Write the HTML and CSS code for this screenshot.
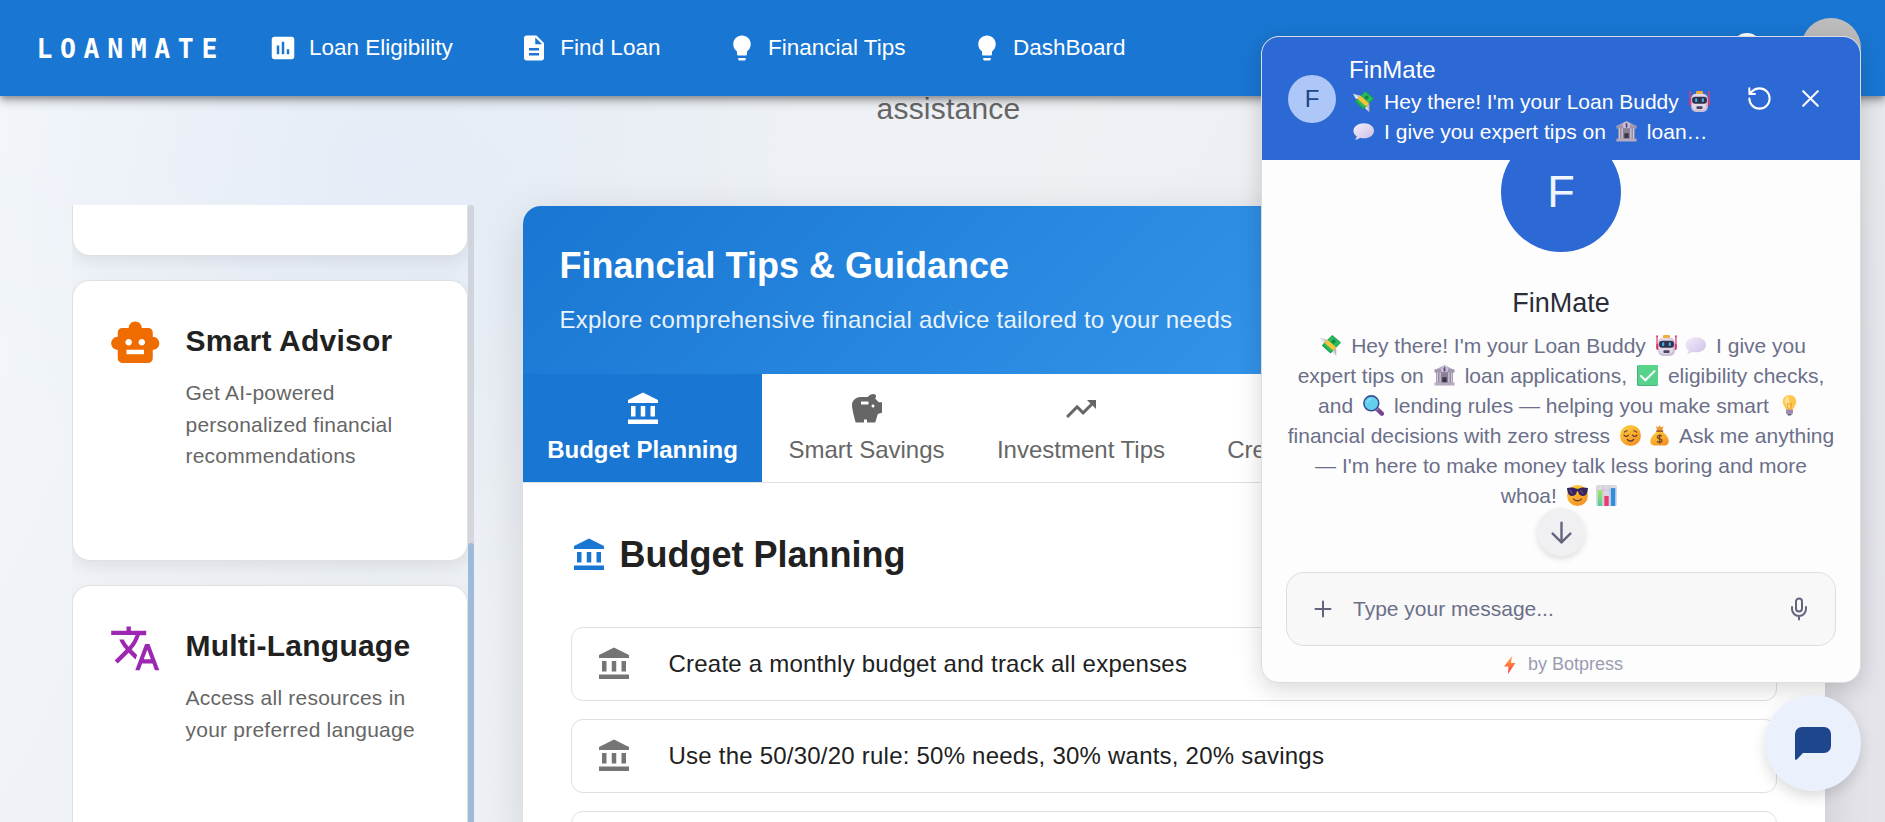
FILE: index.html
```html
<!DOCTYPE html>
<html lang="en">
<head>
<meta charset="utf-8">
<title>LoanMate - Financial Tips</title>
<link rel="stylesheet" href="styles.css">
</head>
<body>
<svg class="defs" width="0" height="0" aria-hidden="true">
  <defs>
    <linearGradient id="gYellow" x1="0" y1="0" x2="0.6" y2="1"><stop offset="0" stop-color="#ffd43f"/><stop offset="1" stop-color="#f59324"/></linearGradient>
    <linearGradient id="gGreen" x1="0" y1="0" x2="0" y2="1"><stop offset="0" stop-color="#9be860"/><stop offset="1" stop-color="#57c9a0"/></linearGradient>
    <linearGradient id="gBolt" x1="0" y1="0" x2="0" y2="1"><stop offset="0" stop-color="#fcb045"/><stop offset="1" stop-color="#fd3a3a"/></linearGradient>
    <linearGradient id="gBubble" x1="0" y1="0" x2="1" y2="1"><stop offset="0" stop-color="#f4eefb"/><stop offset="1" stop-color="#cdbfe6"/></linearGradient>
  </defs>
  <symbol id="bank" viewBox="0 0 24 24"><path d="M4 10h3v7H4zm6.5 0h3v7h-3zM2 19h20v3H2zm15-9h3v7h-3zm-5-9L2 6v2h20V6z"/></symbol>
  <symbol id="bulb" viewBox="0 0 24 24"><path d="M9 21c0 .5.4 1 1 1h4c.6 0 1-.5 1-1v-1H9zm3-19C8.100 2 5 5.100 5 9c0 2.400 1.200 4.500 3 5.700V17c0 .5.4 1 1 1h6c.6 0 1-.5 1-1v-2.300c1.800-1.300 3-3.400 3-5.700 0-3.900-3.100-7-7-7"/></symbol>

  <symbol id="e-money" viewBox="0 0 24 24">
    <path d="M0 3l9 2.500-4 5z" fill="#c9c7ce"/><path d="M0 3l6 4-2.500 2z" fill="#e9e8ee"/>
    <path d="M12 18l6.500-3v9z" fill="#dddce3"/><path d="M16 17l2.500 7v-9z" fill="#b9b6c2"/>
    <path d="M2 12L14 0l10 8.500L12 21z" fill="#17a34c"/><path d="M4 11.500L14 1.500l8.500 7L12 19z" fill="#2cbb5f"/>
    <path d="M5 8.800l3.500-3.500 10 9-3.500 3.500z" fill="#fbc13b"/><circle cx="15.500" cy="7.500" r="2.400" fill="#148a3e"/>
  </symbol>
  <symbol id="e-robot" viewBox="0 0 24 24">
    <path d="M1.200 2v13M22.800 2v13" stroke="#e4406e" stroke-width="1.500"/><circle cx="1.200" cy="1.500" r="1.200" fill="#e4406e"/><circle cx="22.800" cy="1.500" r="1.200" fill="#e4406e"/>
    <rect x="0.300" y="10" width="3.500" height="7" rx="1.500" fill="#d93870"/><rect x="20.200" y="10" width="3.500" height="7" rx="1.500" fill="#d93870"/>
    <rect x="8" y="0" width="8" height="4" rx="1.200" fill="#f3ae32"/>
    <rect x="2.500" y="3" width="19" height="21" rx="5.500" fill="#cbbfd6"/><rect x="3.500" y="3.500" width="16" height="18" rx="5" fill="#e2d8ea"/>
    <rect x="3.500" y="6.500" width="17" height="8" rx="3.500" fill="#35304a"/>
    <rect x="7" y="8.200" width="2.400" height="4.500" rx="1" fill="#34b6f2"/><rect x="14.600" y="8.200" width="2.400" height="4.500" rx="1" fill="#34b6f2"/>
    <rect x="8.500" y="17.500" width="7" height="3" rx="1" fill="#4b4160"/>
  </symbol>
  <symbol id="e-bubble" viewBox="0 0 24 24">
    <path d="M12.500 2.500C19 2.500 24 6.200 24 11s-5 8.800-11.500 8.800c-1.500 0-3-.2-4.300-.7C6.800 20.500 4.500 21.300 2.100 21.100c1.300-1.100 2-2.300 2.100-3.700C2 15.900.5 13.800.5 11 .5 6.200 6 2.500 12.500 2.500z" fill="url(#gBubble)"/>
  </symbol>
  <symbol id="e-bank" viewBox="0 0 24 24">
    <path d="M12 0l10.500 5.500V9h-21V5.500z" fill="#b1a6bd"/><rect x="0.500" y="5" width="23" height="3.200" fill="#a095ac"/>
    <circle cx="12" cy="5" r="4" fill="#cbc2d3"/><path d="M12 2.200v5.600M13.300 3.500h-2v1.500h1.600v1.500h-2" stroke="#60408a" stroke-width="1" fill="none"/>
    <rect x="2.500" y="8.200" width="19" height="12.500" fill="#8a8095"/>
    <path d="M4 8.200v12M7 8.200v12M17 8.200v12M20 8.200v12" stroke="#cfc6d7" stroke-width="1.600"/>
    <path d="M9.500 20v-6h5v6z" fill="#3c3447"/><rect x="0.500" y="20" width="23" height="3.500" rx=".5" fill="#b5aabf"/>
  </symbol>
  <symbol id="e-check" viewBox="0 0 24 24">
    <rect x="0" y="0" width="24" height="24" rx="2" fill="#3fa77d"/><rect x="1" y="0" width="23" height="23" rx="2" fill="#57d38c"/>
    <path d="M4.500 12.500l5 5L20 7" stroke="#fff" stroke-width="2.300" fill="none" stroke-linecap="round" stroke-linejoin="round"/>
  </symbol>
  <symbol id="e-lens" viewBox="0 0 24 24">
    <path d="M16 16l5.500 5.300" stroke="#75468f" stroke-width="5" stroke-linecap="round"/><path d="M14 14l3 3" stroke="#a99db6" stroke-width="2.500"/>
    <circle cx="9.500" cy="9.500" r="8.500" fill="#63d0ee" stroke="#3c4d94" stroke-width="1.800"/><path d="M5 8a5 5 0 0 1 4-3.500" stroke="#8fe2f6" stroke-width="1.500" fill="none" stroke-linecap="round"/>
  </symbol>
  <symbol id="e-bulb" viewBox="0 0 24 24">
    <path d="M12 0c4.700 0 7.700 3.400 7.700 7.400 0 4-2.700 5.300-3.700 9.600H8c-1-4.300-3.700-5.600-3.700-9.600C4.300 3.400 7.300 0 12 0z" fill="#fcc74c"/>
    <path d="M11 1.500C7.500 2 6 5 6.500 8l3 6h3z" fill="#fde28c"/><path d="M10.500 16L9.500 9.500l2.500 1.500 2.500-1.500-1 6.500" stroke="#ef9a2e" stroke-width="1" fill="none"/>
    <rect x="8" y="16.500" width="8" height="5" rx="1" fill="#9a8aad"/><path d="M9 21.500h6l-1.500 2h-3z" fill="#6b5b80"/>
  </symbol>
  <symbol id="e-calm" viewBox="0 0 24 24">
    <circle cx="12" cy="12" r="12" fill="url(#gYellow)"/>
    <path d="M4.500 11.500c1.300 2 4 2 5.300 0M14.200 11.500c1.300 2 4 2 5.300 0M8.300 16.500c1.800 2.600 5.600 2.600 7.400 0M5 8.200c.8-1 2-1.600 3.200-1.600M19 8.200c-.8-1-2-1.600-3.200-1.600" stroke="#54303a" stroke-width="1.300" fill="none" stroke-linecap="round"/>
  </symbol>
  <symbol id="e-bag" viewBox="0 0 24 24">
    <path d="M8 1.500l2.500 1L12 0l1.500 2.500 3-1L15 7H9.500z" fill="#ee9834"/>
    <path d="M9.500 7h5.500c4 3 7.500 7 7.500 11.500 0 3.500-2 5-5 5h-11c-3 0-5-1.500-5-5C1.500 14 5.500 10 9.500 7z" fill="url(#gYellow)"/>
    <path d="M9 7h6.500" stroke="#a35e2f" stroke-width="1.800" stroke-linecap="round"/>
    <path d="M14.800 12.800c-1-1.400-5.300-1.400-5.300 1 0 2.500 5.500 1.400 5.500 4 0 2.500-4.500 2.400-5.700.8M12.200 10.500v10.500" stroke="#74482c" stroke-width="1.500" fill="none"/>
  </symbol>
  <symbol id="e-cool" viewBox="0 0 24 24">
    <circle cx="12" cy="12" r="12" fill="url(#gYellow)"/>
    <path d="M0 3.500c4-1 8-1 12 1.200 4-2.200 8-2.200 12-1.200l-.4 3c-.6 4-2.600 6-5.600 6s-5-2-5.300-5.300h-1.400C11 10.500 9 12.500 6 12.500s-5-2-5.600-6z" fill="#35255a"/>
    <path d="M3 5.500l3 4M15.500 6l3 4" stroke="#6b4f96" stroke-width="1.400"/>
    <path d="M7.500 16c2 2.800 7 2.800 9 0" stroke="#54303a" stroke-width="1.400" fill="none" stroke-linecap="round"/>
  </symbol>
  <symbol id="e-chart" viewBox="0 0 24 24">
    <rect x="0" y="0" width="24" height="24" rx="2" fill="#dcd8e3"/><path d="M0 6h24M8.300 0v24M15.700 0v24" stroke="#c0bac9" stroke-width=".7"/>
    <path d="M2 6h5v18H2z" fill="url(#gGreen)"/><path d="M9.500 12.500h5V24h-5z" fill="#e63a73"/><path d="M17 3.500h5V24h-5z" fill="#2e8fe0"/>
  </symbol>
</svg>

<header class="navbar">
  <div class="brand">LOANMATE</div>
  <nav class="nav-links">
    <a class="nav-link"><svg class="nav-icon" viewBox="0 0 24 24"><path d="M19 3H5c-1.100 0-2 .9-2 2v14c0 1.100.9 2 2 2h14c1.100 0 2-.9 2-2V5c0-1.100-.9-2-2-2M9 17H7v-7h2zm4 0h-2V7h2zm4 0h-2v-4h2z"/></svg>Loan Eligibility</a>
    <a class="nav-link"><svg class="nav-icon" viewBox="0 0 24 24"><path d="M14 2H6c-1.100 0-1.990.9-1.990 2L4 20c0 1.100.89 2 1.990 2H18c1.100 0 2-.9 2-2V8zm2 16H8v-2h8zm0-4H8v-2h8zm-3-5V3.500L18.500 9z"/></svg>Find Loan</a>
    <a class="nav-link"><svg class="nav-icon"><use href="#bulb"/></svg>Financial Tips</a>
    <a class="nav-link"><svg class="nav-icon"><use href="#bulb"/></svg>DashBoard</a>
  </nav>
  <div class="nav-user"><span class="theme-dot"></span><span class="avatar"></span></div>
</header>

<main class="page">
  <p class="lead">assistance</p>
  <div class="columns">
    <aside class="features">
      <div class="feature-list">
        <section class="feature feature-tail"></section>
        <section class="feature">
          <svg class="feature-icon orange" viewBox="0 0 24 24"><path d="M20 9V7c0-1.100-.9-2-2-2h-3c0-1.660-1.340-3-3-3S9 3.340 9 5H6c-1.100 0-2 .9-2 2v2c-1.660 0-3 1.340-3 3s1.340 3 3 3v4c0 1.100.9 2 2 2h12c1.100 0 2-.9 2-2v-4c1.660 0 3-1.340 3-3s-1.340-3-3-3M7.500 11.500c0-.83.67-1.500 1.500-1.500s1.500.67 1.500 1.500S9.830 13 9 13s-1.500-.67-1.500-1.500M16 17H8v-2h8zm-1-4c-.83 0-1.500-.67-1.500-1.500S14.170 10 15 10s1.500.67 1.500 1.500S15.830 13 15 13"/></svg>
          <div><h3 class="feature-title">Smart Advisor</h3><p class="feature-text">Get AI-powered personalized financial recommendations</p></div>
        </section>
        <section class="feature">
          <svg class="feature-icon purple" viewBox="0 0 24 24"><path d="m12.870 15.070-2.540-2.510.03-.03c1.740-1.940 2.980-4.170 3.710-6.530H17V4h-7V2H8v2H1v1.990h11.170C11.500 7.920 10.440 9.750 9 11.350 8.070 10.320 7.300 9.190 6.690 8h-2c.73 1.630 1.730 3.170 2.980 4.560l-5.090 5.020L4 19l5-5 3.110 3.110zM18.500 10h-2L12 22h2l1.120-3h4.750L21 22h2zm-2.620 7 1.620-4.330L19.120 17z"/></svg>
          <div><h3 class="feature-title">Multi-Language</h3><p class="feature-text">Access all resources in your preferred language</p></div>
        </section>
      </div>
      <div class="scroll-track"><div class="scroll-thumb"></div></div>
    </aside>

    <section class="tips">
      <div class="tips-head">
        <h2 class="tips-title">Financial Tips &amp; Guidance</h2>
        <p class="tips-sub">Explore comprehensive financial advice tailored to your needs</p>
      </div>
      <div class="tabs">
        <div class="tab active"><svg class="icon36"><use href="#bank"/></svg>Budget Planning</div>
        <div class="tab savings"><svg class="icon36" viewBox="0 0 24 24"><path d="m19.830 7.500-2.270-2.270c.07-.42.180-.81.320-1.150.08-.18.120-.37.120-.58 0-.83-.67-1.500-1.500-1.500-1.640 0-3.090.79-4 2h-5C4.460 4 2 6.460 2 9.500S4.500 21 4.500 21H10v-2h2v2h5.500l1.680-5.590 2.820-.94V7.500zM13 9H8V7h5zm3 2c-.55 0-1-.45-1-1s.45-1 1-1 1 .45 1 1-.45 1-1 1"/></svg>Smart Savings</div>
        <div class="tab invest"><svg class="icon36" viewBox="0 0 24 24"><path d="m16 6 2.290 2.290-4.880 4.880-4-4L2 16.590 3.410 18l6-6 4 4 6.300-6.290L22 12V6z"/></svg>Investment Tips</div>
        <div class="tab credit"><svg class="icon36" viewBox="0 0 24 24"><path d="M20 4H4c-1.100 0-2 .9-2 2v12c0 1.100.9 2 2 2h16c1.100 0 2-.9 2-2V6c0-1.100-.9-2-2-2m0 14H4v-6h16zm0-10H4V6h16z"/></svg>Credit Tips</div>
      </div>
      <div class="tips-body">
        <h2 class="section-title"><svg class="icon36 blue"><use href="#bank"/></svg>Budget Planning</h2>
        <ul class="tip-list">
          <li class="tip"><svg class="icon36"><use href="#bank"/></svg>Create a monthly budget and track all expenses</li>
          <li class="tip"><svg class="icon36"><use href="#bank"/></svg>Use the 50/30/20 rule: 50% needs, 30% wants, 20% savings</li>
          <li class="tip"></li>
        </ul>
      </div>
    </section>
  </div>
</main>

<div class="chat">
  <div class="chat-head">
    <div class="chat-avatar">F</div>
    <div class="chat-info">
      <div class="chat-name">FinMate</div>
      <div class="chat-desc"><svg class="emoji"><use href="#e-money"/></svg> Hey there! I'm your Loan Buddy <svg class="emoji"><use href="#e-robot"/></svg><br><svg class="emoji"><use href="#e-bubble"/></svg> I give you expert tips on <svg class="emoji"><use href="#e-bank"/></svg> loan…</div>
    </div>
    <svg class="head-icon" viewBox="0 0 24 24"><path d="M3 12a9 9 0 1 0 9-9 9.750 9.750 0 0 0-6.740 2.740L3 8M3 3v5h5"/></svg>
    <svg class="head-icon" viewBox="0 0 24 24"><path d="M18.500 5.500l-13 13M5.500 5.500l13 13"/></svg>
  </div>
  <div class="chat-body">
    <div class="bot-circle">F</div>
    <div class="bot-name">FinMate</div>
    <p class="bot-text"><svg class="emoji"><use href="#e-money"/></svg> Hey there! I'm your Loan Buddy <svg class="emoji"><use href="#e-robot"/></svg><svg class="emoji"><use href="#e-bubble"/></svg> I give you<br>expert tips on <svg class="emoji"><use href="#e-bank"/></svg> loan applications, <svg class="emoji"><use href="#e-check"/></svg> eligibility checks,<br>and <svg class="emoji"><use href="#e-lens"/></svg> lending rules — helping you make smart <svg class="emoji"><use href="#e-bulb"/></svg><br>financial decisions with zero stress <svg class="emoji"><use href="#e-calm"/></svg><svg class="emoji"><use href="#e-bag"/></svg> Ask me anything<br>— I'm here to make money talk less boring and more<br>whoa! <svg class="emoji"><use href="#e-cool"/></svg><svg class="emoji"><use href="#e-chart"/></svg></p>
    <div class="scroll-down"><svg class="line-icon arrow" viewBox="0 0 24 24"><path d="M12 2.500v19M3.500 13l8.500 8.500 8.500-8.500"/></svg></div>
  </div>
  <div class="composer">
    <svg class="line-icon plus" viewBox="0 0 24 24"><path d="M4.500 12h15M12 4.500v15"/></svg>
    <span class="placeholder">Type your message...</span>
    <svg class="line-icon mic" viewBox="0 0 24 24"><path d="M12 1.500a3 3 0 0 0-3 3v7a3 3 0 0 0 6 0v-7a3 3 0 0 0-3-3zM19 10v2a7 7 0 0 1-14 0v-2M12 19v3.500"/></svg>
  </div>
  <div class="powered"><svg class="bolt" viewBox="0 0 12 18"><path d="M8 0L0 10.500h4.500L4 18l7.500-11H7z" fill="url(#gBolt)"/></svg>by Botpress</div>
</div>
<div class="fab"><svg class="fab-icon" viewBox="0 0 36 33"><path d="M7 0h22a7 7 0 0 1 7 7v12a7 7 0 0 1-7 7H8l-6.200 6.500A1 1 0 0 1 0 31.800V7a7 7 0 0 1 7-7z"/></svg></div>
</body>
</html>
```

FILE: styles.css
```css
* { box-sizing: border-box; }

html { overflow: hidden; }

body {
  margin: 0;
  width: 1885px;
  height: 822px;
  overflow: hidden;
  position: relative;
  font-family: "Liberation Sans", Arial, sans-serif;
  color: #212121;
  background:
    radial-gradient(circle at 20% 20%, rgba(222, 231, 247, .55) 0, rgba(222, 231, 247, 0) 420px),
    linear-gradient(115deg, #f4f7fb 0%, #ecf0f4 28%, #eff1f5 50%, #e9ecf0 75%, #e3e3e9 100%);
}

h2, h3, p, ul { margin: 0; padding: 0; }
ul { list-style: none; }
svg { display: block; fill: currentColor; }
.defs { position: absolute; }

/* Navigation */
.navbar {
  position: relative;
  z-index: 1;
  display: flex;
  align-items: center;
  height: 96px;
  padding: 0 24px 0 36.500px;
  background: #1976d2;
  color: #fff;
  box-shadow: 0 3px 6px -1px rgba(0, 0, 0, .3), 0 6px 8px rgba(0, 0, 0, .14), 0 2px 15px rgba(0, 0, 0, .12);
}
.brand {
  width: 231.500px;
  padding-top: 2px;
  font: bold 26.500px/40px "DejaVu Sans Mono", monospace;
  letter-spacing: 7.600px;
}
.nav-links { display: flex; gap: 66.500px; }
.nav-link {
  display: flex;
  align-items: center;
  gap: 11px;
  font-size: 22.500px;
  line-height: 36px;
  white-space: nowrap;
}
.nav-icon { width: 30px; height: 30px; }
.nav-user { display: flex; align-items: center; gap: 39px; margin-left: auto; }
.theme-dot { width: 30px; height: 30px; border-radius: 50%; background: #fff; }
.avatar { width: 60px; height: 60px; border-radius: 50%; background: #bdbdbd; }

/* Page columns */
.page { height: 726px; padding: 0 60px 0 72px; overflow: hidden; }
.lead {
  height: 109px;
  padding-top: 1px;
  text-align: center;
  font-size: 30px;
  line-height: 24px;
  letter-spacing: .0075em;
  color: #666;
}
.columns { display: grid; grid-template-columns: 402px 1302px; grid-auto-rows: 617px; gap: 49px; height: 617px; }

.features { display: flex; overflow: hidden; }
.feature-list { width: 396px; overflow: hidden; display: flex; flex-direction: column; gap: 24px; }
.feature {
  flex: none;
  display: flex;
  gap: 24px;
  height: 281px;
  padding: 36px;
  background: #fff;
  border: 1px solid #e0e0e0;
  border-radius: 18px;
  box-shadow: 0 6px 18px rgba(0, 0, 0, .08);
}
.feature-tail { height: 51px; padding: 0; border-top: 0; border-radius: 0 0 18px 18px; }
.feature-icon { flex: none; width: 52.500px; height: 52.500px; }
.orange { color: #ef6c00; }
.purple { color: #9c27b0; }
.feature-title { font-size: 30px; line-height: 47px; letter-spacing: .0075em; margin-bottom: 13px; white-space: nowrap; }
.feature-text { font-size: 21px; line-height: 31.500px; letter-spacing: .01071em; color: #666; }
.scroll-track { width: 6px; border-radius: 6px 6px 0 0; background: rgba(0, 0, 0, .1); padding-top: 338px; }
.scroll-thumb { height: 279px; border-radius: 6px 6px 0 0; background: #9dbad9; }

/* Tips panel */
.tips {
  margin-top: 1px;
  height: 640px;
  background: #fff;
  border-radius: 18px 18px 0 0;
  box-shadow: 0 12px 48px rgba(0, 0, 0, .13);
  overflow: hidden;
}
.tips-head { height: 168px; padding: 36px 36px 36px 36.500px; color: #fff; background: linear-gradient(135deg, #1976d2, #42a5f5); }
.tips-title { font-size: 36px; line-height: 48px; }
.tips-sub { margin-top: 12px; font-size: 24px; line-height: 36px; letter-spacing: .00938em; opacity: .9; }
.tabs { display: flex; height: 109px; border-bottom: 1px solid #e0e0e0; }
.tab {
  flex: none;
  display: flex;
  flex-direction: column;
  align-items: center;
  gap: 9px;
  padding-top: 17px;
  width: 239px;
  font-size: 24px;
  line-height: 28px;
  color: #666;
  white-space: nowrap;
}
.tab.active { background: #1976d2; color: #fff; font-weight: bold; }
.tab.savings { width: 209px; }
.tab.invest { width: 220px; }
.tab.credit { width: 187px; }
.icon36 { flex: none; width: 36px; height: 36px; }
.tips-body { height: 363px; padding: 48px 48px 0; overflow: hidden; }
.section-title { display: flex; align-items: center; gap: 12.500px; font-size: 36px; line-height: 48px; margin-bottom: 48px; }
.blue { color: #1976d2; }
.tip-list { display: flex; flex-direction: column; gap: 18px; }
.tip {
  display: flex;
  align-items: center;
  gap: 36.500px;
  height: 74px;
  padding: 0 24px;
  border: 1px solid #e0e0e0;
  border-radius: 12px;
  font-size: 24px;
  letter-spacing: .00938em;
}
.tip .icon36 { color: #757575; }

/* Chat window */
.chat {
  position: absolute;
  z-index: 2;
  left: 1261px;
  top: 36px;
  width: 600px;
  height: 647px;
  display: flex;
  flex-direction: column;
  background: #fdfdfe;
  border: 1px solid #dcdde3;
  border-radius: 18px;
  overflow: hidden;
  box-shadow: 0 6px 24px rgba(0, 0, 0, .16);
}
.chat-head { flex: none; display: flex; align-items: center; height: 123px; padding: 0 36px 0 26px; background: #2d69d4; color: #fff; }
.chat-avatar {
  flex: none;
  width: 48px;
  height: 48px;
  border-radius: 50%;
  background: #adc7f8;
  color: #1c4687;
  text-align: center;
  font-size: 24px;
  line-height: 48px;
}
.chat-info { flex: none; width: 410px; padding: 1.500px 0 0 13px; white-space: nowrap; }
.chat-name { font-size: 24px; line-height: 35px; }
.chat-desc { font-size: 21px; line-height: 30px; }
.emoji { display: inline-block; width: 21px; height: 21px; margin: 0 4.150px; vertical-align: -3px; }
.head-icon { flex: none; width: 27px; height: 27px; fill: none; stroke: #fff; stroke-width: 1.800; stroke-linecap: round; stroke-linejoin: round; }
.head-icon + .head-icon { margin-left: 24px; }
.chat-body { flex: none; height: 412px; display: flex; flex-direction: column; align-items: center; overflow: hidden; }
.bot-circle {
  flex: none;
  width: 120px;
  height: 120px;
  margin-top: -28px;
  border-radius: 50%;
  background: #2d69d4;
  color: #eff4fe;
  text-align: center;
  font-size: 45px;
  line-height: 120px;
}
.bot-name { margin-top: 33px; font-size: 27px; line-height: 36px; color: #2b2d38; }
.bot-text { margin-top: 10px; font-size: 21px; line-height: 30px; color: #6b6f88; text-align: center; white-space: nowrap; }
.scroll-down {
  flex: none;
  display: flex;
  align-items: center;
  justify-content: center;
  width: 48px;
  height: 48px;
  margin-top: -3px;
  border-radius: 50%;
  background: #f0f0f2;
  box-shadow: 0 3px 6px rgba(0, 0, 0, .12);
}
.line-icon { flex: none; fill: none; stroke: #62657d; stroke-width: 2; stroke-linecap: round; stroke-linejoin: round; }
.arrow { width: 25px; height: 25px; stroke-width: 2.300; }
.composer {
  flex: none;
  display: flex;
  align-items: center;
  height: 74px;
  margin: 0 24px;
  padding: 0 24px;
  background: #f8f8f8;
  border: 1px solid #dcdde0;
  border-radius: 18px;
}
.plus { width: 24px; height: 24px; }
.placeholder { flex: 1; padding-left: 18px; font-size: 21px; color: #6b6f88; }
.mic { width: 24px; height: 24px; }
.powered { display: flex; align-items: center; justify-content: center; gap: 12px; height: 37px; padding: 1px 0 0 5px; font-size: 18px; color: #9a9cb0; }
.bolt { width: 12px; height: 18px; }

.fab {
  position: absolute;
  z-index: 2;
  left: 1765px;
  top: 695px;
  width: 96px;
  height: 96px;
  display: flex;
  align-items: center;
  justify-content: center;
  border-radius: 50%;
  background: #eaf1fd;
  color: #1e468c;
  box-shadow: 0 6px 14px rgba(0, 0, 0, .14);
}
.fab-icon { width: 36px; height: 33px; }
```
